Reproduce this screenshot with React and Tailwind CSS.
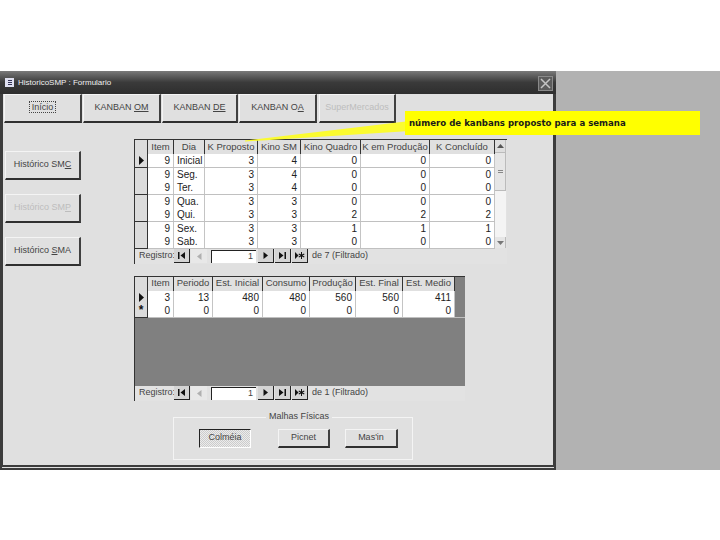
import React from 'react';

const topRows = [
  ['9', 'Inicial', '3', '4', '0', '0', '0'],
  ['9', 'Seg.', '3', '4', '0', '0', '0'],
  ['9', 'Ter.', '3', '4', '0', '0', '0'],
  ['9', 'Qua.', '3', '3', '0', '0', '0'],
  ['9', 'Qui.', '3', '3', '2', '2', '2'],
  ['9', 'Sex.', '3', '3', '1', '1', '1'],
  ['9', 'Sab.', '3', '3', '0', '0', '0'],
];
const topCols = [
  { name: 'Item', w: 'w-[26px]' },
  { name: 'Dia', w: 'w-[31px]', left: true },
  { name: 'K Proposto', w: 'w-[53px]' },
  { name: 'Kino SM', w: 'w-[43px]' },
  { name: 'Kino Quadro', w: 'w-[60px]' },
  { name: 'K em Produção', w: 'w-[69px]' },
  { name: 'K Concluído', w: 'w-[65px]' },
];
const bottomCols = [
  { name: 'Item', w: 'w-[26px]' },
  { name: 'Periodo', w: 'w-[39px]' },
  { name: 'Est. Inicial', w: 'w-[50px]' },
  { name: 'Consumo', w: 'w-[47px]' },
  { name: 'Produção', w: 'w-[46px]' },
  { name: 'Est. Final', w: 'w-[47px]' },
  { name: 'Est. Medio', w: 'w-[52px]' },
];
const bottomRows = [
  ['3', '13', '480', '480', '560', '560', '411'],
  ['0', '0', '0', '0', '0', '0', '0'],
];

function Raised({ children, className = '' }) {
  return (
    <div className={`flex items-center justify-center border-t border-l border-t-[#f4f4f4] border-l-[#f4f4f4] border-b-2 border-r-2 border-b-[#303030] border-r-[#404040] bg-[#e0e0e0] text-[9px] text-[#444] ${className}`}>
      <span className="whitespace-pre">{children}</span>
    </div>
  );
}

function Glyph({ d, muted }) {
  return (
    <svg width="11" height="9" viewBox="0 0 11 9">
      <path d={d} fill={muted ? '#b0b0b0' : '#111'} />
    </svg>
  );
}

const first = 'M2 1h1.5v7H2zM9 1v7L4.5 4.500z';
const prev = 'M7.500 1v7L3 4.500z';
const next = 'M3.500 1v7L8 4.500z';
const last = 'M2 1v7l4.500-3.500zM7.500 1H9v7H7.500z';
const add = 'M1 1v7l3.500-3.500zM7 1h1v2.500l2-1 .5 1-2 1 2 1-.5 1-2-1V8H7V5.500l-2 1-.5-1 2-1-2-1 .5-1 2 1z';

function NavButton({ d, muted, className = '' }) {
  return (
    <div className={`flex h-[14px] w-[16px] items-center justify-center ${muted ? 'bg-[#e8e8e8]' : 'border-b border-r border-b-[#222] border-r-[#222] bg-[#d4d4d4]'} ${className}`}>
      <Glyph d={d} muted={muted} />
    </div>
  );
}

function RecordNav({ total, value, className = '' }) {
  return (
    <div className={`flex h-[15px] items-center bg-[#e2e2e2] pl-[4px] text-[9px] text-[#444] ${className}`}>
      <span className="w-[35px]">Registro:</span>
      <NavButton d={first} />
      <NavButton d={prev} muted className="ml-[1px] w-[14px]" />
      <div className="ml-[4px] flex h-[13px] w-[45px] items-center justify-end border-t border-l border-t-[#222] border-l-[#222] bg-white pr-[3px]">{value}</div>
      <NavButton d={next} className="ml-[2px]" />
      <NavButton d={last} className="ml-[1px]" />
      <NavButton d={add} className="ml-[1px]" />
      <span className="ml-[4px]">de {total} (Filtrado)</span>
    </div>
  );
}

function HeaderRow({ cols }) {
  return (
    <div className="flex h-[14px]">
      <div className="w-[13px] border-r border-r-[#333] bg-[#dcdcdc]" />
      {cols.map((c) => (
        <div key={c.name} className={`${c.w} flex items-center justify-center border-r border-r-[#333] bg-[#e0e0e0] text-[9.5px] whitespace-nowrap text-[#444]`}>
          {c.name}
        </div>
      ))}
    </div>
  );
}

function Marker({ kind }) {
  if (kind === 'current') return <svg width="7" height="9" viewBox="0 0 7 9"><path d="M1 0v9l5-4.500z" fill="#111" /></svg>;
  if (kind === 'new') return <span className="text-[12px] leading-none font-bold text-[#111]">*</span>;
  return null;
}

function DataRow({ row, cols, marker, lined, h }) {
  return (
    <div className={`flex ${h} ${lined ? 'border-b border-b-[#c0c0c0]' : ''}`}>
      <div className={`flex w-[13px] items-center justify-center border-r border-r-[#333] bg-[#dcdcdc] ${lined ? 'shadow-[0_1px_0_#333]' : ''}`}>
        <Marker kind={marker} />
      </div>
      {row.map((v, i) => (
        <div key={i} className={`${cols[i].w} flex items-center border-r border-r-[#c4c4c4] bg-white px-[3px] text-[10px] text-[#222] ${cols[i].left ? 'justify-start text-[9.5px]' : 'justify-end'}`}>
          {v}
        </div>
      ))}
    </div>
  );
}

function Scrollbar() {
  return (
    <div className="flex h-[108px] w-[12px] flex-col bg-[#f4f4f4]">
      <div className="flex h-[13px] items-center justify-center border-b border-r border-b-[#bbb] border-r-[#bbb] bg-[#dedede]">
        <svg width="7" height="4" viewBox="0 0 7 4"><path d="M0 4l3.500-4L7 4z" fill="#555" /></svg>
      </div>
      <div className="flex h-[38px] flex-col items-center justify-center gap-[1px] border-b border-r border-b-[#bbb] border-r-[#bbb] bg-[#e6e6e6]">
        <div className="h-px w-[5px] bg-[#888]" />
        <div className="h-px w-[5px] bg-[#888]" />
      </div>
      <div className="flex-1" />
      <div className="flex h-[11px] items-center justify-center border-r border-r-[#bbb] bg-[#e6e6e6]">
        <svg width="7" height="4" viewBox="0 0 7 4"><path d="M0 0l3.500 4L7 0z" fill="#777" /></svg>
      </div>
    </div>
  );
}

export default function App() {
  return (
    <div className="flex h-[540px] w-[720px] flex-col bg-white pt-[71px] font-['Liberation_Sans',sans-serif]">
      <div className="relative flex h-[399px]">
        <div className="flex w-[556px] flex-col border-x-[3px] border-b-[5px] border-x-[#3c3c3c] border-b-[#3c3c3c] [border-bottom-style:double] bg-[#e0e0e0]">
          {/* title bar */}
          <div className="-mx-[3px] flex h-[23px] shrink-0 items-center bg-gradient-to-b from-[#7a7a7a] via-[#3a3a3a] to-[#2e2e2e] pr-[3px] pl-[5px]">
            <div className="mr-[4px] flex h-[9px] w-[9px] flex-col justify-center gap-px bg-[#dfe0f0] pr-[2px] pl-[3px]">
              <div className="h-px bg-[#335]" />
              <div className="h-px bg-[#335]" />
              <div className="h-px bg-[#335]" />
            </div>
            <span className="text-[8px] text-[#f0f0f0]">HistoricoSMP : Formulario</span>
            <div className="mt-[2px] ml-auto flex h-[15px] w-[15px] items-center justify-center border border-[#8a8a8a] bg-[#5c5c5c]">
              <svg width="11" height="11" viewBox="0 0 11 11"><path d="M1 1l9 9M10 1l-9 9" stroke="#c4c4c4" strokeWidth="1.500" /></svg>
            </div>
          </div>

          {/* tabs */}
          <div className="flex h-[29px] shrink-0 gap-[1px] pl-[1px]">
            <Raised className="w-[78px]"><span className="border border-dotted border-[#444] px-[2px]">Início</span></Raised>
            <Raised className="w-[78px]">KANBAN <u>OM</u></Raised>
            <Raised className="w-[76px]">KANBAN <u>DE</u></Raised>
            <Raised className="w-[78px]">KANBAN O<u>A</u></Raised>
            <Raised className="ml-[1px] w-[77px] border-t-[#555] text-[#bdbdbd]">SuperMercados</Raised>
          </div>

          {/* main area */}
          <div className="flex flex-1 pl-[2px]">
            <div className="flex w-[129px] shrink-0 flex-col gap-[14px] pt-[28px]">
              <Raised className="h-[29px] w-[76px]">Histórico SM<u>C</u></Raised>
              <Raised className="h-[29px] w-[76px] text-[#bdbdbd]">Histórico SM<u>P</u></Raised>
              <Raised className="h-[29px] w-[76px]">Histórico <u>S</u>MA</Raised>
            </div>

            <div className="flex flex-col pt-[16px]">
              {/* weekly table */}
              <div className="w-[373px] border-t border-l border-t-[#333] border-l-[#333] bg-[#e2e2e2] pr-[1px]">
                <div className="flex">
                  <div className="w-[360px]">
                    <HeaderRow cols={topCols} />
                    {topRows.map((r, i) => (
                      <DataRow key={i} row={r} cols={topCols} h="h-[13.5px]" marker={i === 0 ? 'current' : null} lined={i % 2 === 0} />
                    ))}
                  </div>
                  <Scrollbar />
                </div>
                <RecordNav total={7} value="1" />
              </div>

              {/* period table */}
              <div className="mt-[12px] flex h-[125px] w-[331px] flex-col border-t border-l border-t-[#333] border-l-[#333] bg-[#808080]">
                <div className="flex-1">
                  <HeaderRow cols={bottomCols} />
                  <DataRow row={bottomRows[0]} cols={bottomCols} h="h-[13px]" marker="current" />
                  <DataRow row={bottomRows[1]} cols={bottomCols} h="h-[14px]" marker="new" lined />
                </div>
                <RecordNav total={1} value="1" />
              </div>

              {/* option group */}
              <div className="relative mt-[16px] ml-[39px] flex h-[43px] w-[240px] items-start border border-[#f4f4f4] pt-[11px] pl-[25px]">
                <span className="absolute -top-[8px] left-[92px] bg-[#e0e0e0] px-[3px] text-[9px] leading-[12px] text-[#444]">Malhas Físicas</span>
                <div className="flex h-[19px] w-[52px] items-center justify-center border border-t-[#222] border-l-[#222] border-r-white border-b-white bg-[repeating-conic-gradient(#ececec_0_25%,#cccccc_0_50%)] bg-[length:2px_2px] text-[9px] text-[#444]">Colméia</div>
                <Raised className="ml-[27px] h-[19px] w-[52px]">Picnet</Raised>
                <Raised className="ml-[15px] h-[19px] w-[53px]">Mas'in</Raised>
              </div>
            </div>
          </div>
        </div>
        <div className="flex-1 bg-[#b2b2b2]" />

        {/* callout over the form */}
        <svg className="absolute top-0 left-0" width="420" height="80" viewBox="0 0 420 80">
          <path d="M245 69.500L410 50v10L245 70.500z" fill="#fbfb30" />
        </svg>
        <div className="absolute top-[40px] left-[405px] flex h-[24px] w-[295px] items-center bg-[#ffff00] pl-[4px] font-['DejaVu_Sans',sans-serif] text-[8.6px] font-bold text-[#1a1a1a]">
          número de kanbans proposto para a semana
        </div>
      </div>
    </div>
  );
}
